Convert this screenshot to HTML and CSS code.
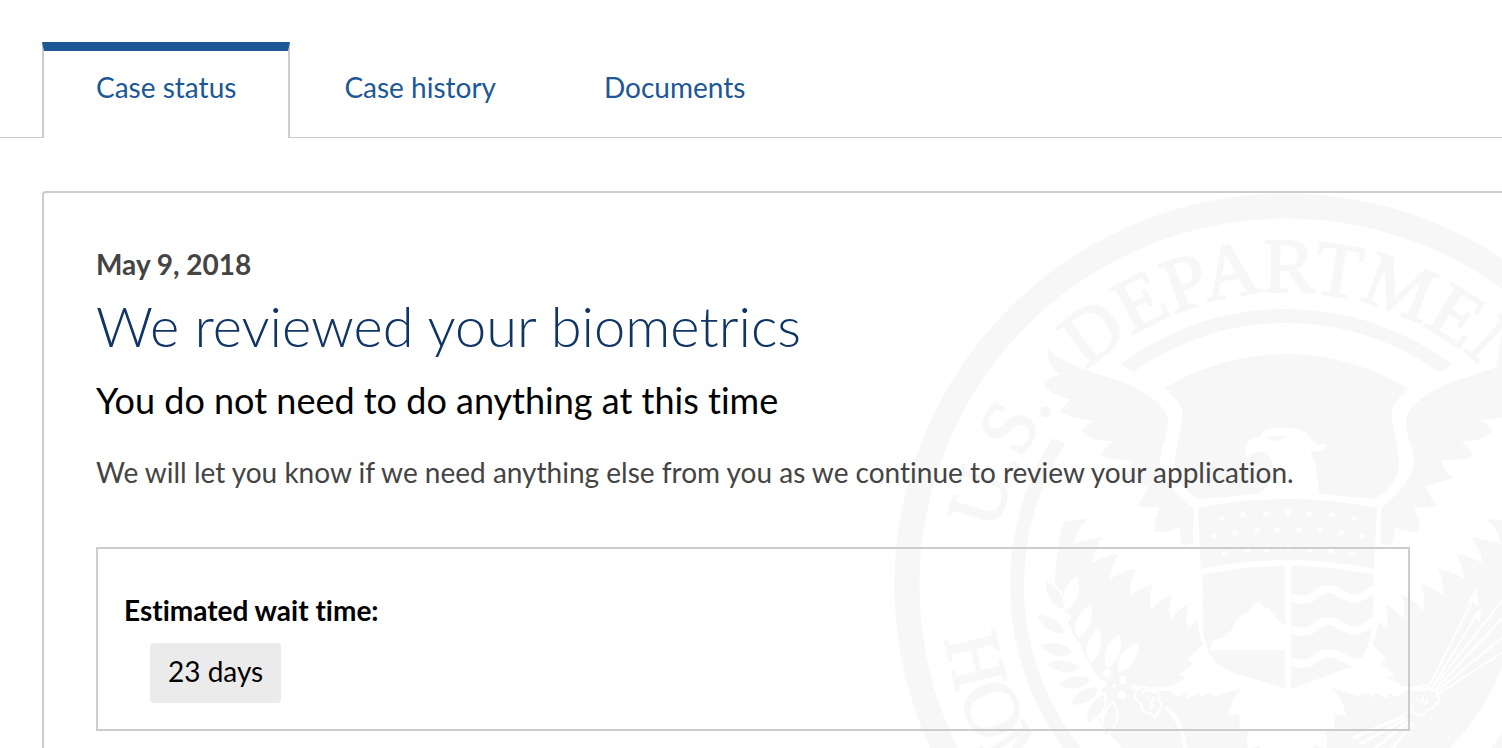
FILE: index.html
```html
<!DOCTYPE html>
<html lang="en">
<head>
    <meta charset="UTF-8">
    <meta name="viewport" content="width=device-width, initial-scale=1.0">
    <title>Case status</title>
    <link rel="stylesheet" href="styles.css">
</head>
<body>
    <nav class="tabs">
        <a href="#status" class="tab active" aria-current="page">Case status</a>
        <a href="#history" class="tab">Case history</a>
        <a href="#documents" class="tab">Documents</a>
    </nav>

    <main class="card" id="status">
        <!-- Department seal watermark -->
        <svg class="seal" viewBox="0 0 784 784" aria-hidden="true">
            <defs>
                <path id="top-arc" d="M99 392 A293 293 0 0 1 685 392"/>
                <path id="bottom-arc" d="M47 392 A345 345 0 0 0 737 392"/>
                <path id="star" d="M0 -4 L1 -1 L4 -1 L2 1 L3 4 L0 2 L-3 4 L-2 1 L-4 -1 L-1 -1Z"/>
                <path id="leaf" d="M0 0 C-10 -9 -8 -24 3 -36 C10 -24 9 -10 0 0Z"/>
                <g id="wing">
                    <path class="light" d="M228 172 L246 183 L280 200 L271 197 C284 206 290 214 288 226 C285 245 281 260 281 272 C283 286 290 297 304 303 L393 300 L393 400 L306 420 L309 455 L306 425 Q298 431 294 436 Q290 424 295 411 Q284 416 277 426 Q273 413 279 401 Q265 407 257 418 Q254 404 259 391 Q246 395 236 403 Q236 389 242 375 Q228 379 216 386 Q217 373 224 361 Q210 363 198 370 Q200 356 209 344 Q195 346 179 351 Q182 336 194 326 L169 328 L172 251 L157 245 L152 200 L146 180 L150 152Z"/>
                    <path d="M154 156 C171 172 200 180 226 188 C246 196 271 210 274 226 C275 240 267 253 266 268 C267 285 284 305 300 315 L299 350 L289 353 Q285 345 286 334 Q274 340 261 339 Q260 326 266 315 L243 313 Q250 305 254 293 L226 285 Q237 279 238 267 L216 266 L207 263 Q211 253 219 248 Q198 249 187 238 L198 227 Q175 226 166 218 L177 206 Q156 202 149 191 Q156 184 166 181 Q153 173 154 156Z"/>
                </g>
                <g id="leg">
                    <path class="light" d="M308 452 L293 466 L299 471 L285 482 L293 484 L278 493 L253 495 L253 498 L276 498 L283 504 L293 500 L292 505 L306 500 L305 505 L315 500 L321 503 L349 495 C337 504 336 515 334 523 L345 521 L346 537 L356 536 Q351 545 354 556 L365 552 L372 572 L393 575 L393 452Z"/>
                </g>
            </defs>

            <circle class="ring" cx="392" cy="392" r="379" stroke-width="25"/>
            <circle class="ring" cx="392" cy="392" r="269" stroke-width="14"/>
            <circle cx="392" cy="392" r="231"/>

            <use href="#wing"/>
            <use href="#wing" transform="matrix(-1 0 0 1 786 0)"/>
            <use href="#leg"/>
            <use href="#leg" transform="matrix(-1 0 0 1 786 0)"/>

            <text class="seal-text" text-anchor="middle"><textPath href="#top-arc" startOffset="54%">DEPARTMENT</textPath></text>
            <text class="seal-text"><textPath href="#top-arc" startOffset="54">U.S.</textPath></text>
            <text class="seal-text"><textPath href="#bottom-arc" startOffset="54">HOMELAND</textPath></text>

            <!-- Eagle head -->
            <path d="M288 220 L288 230 C285 245 281 260 281 272 C283 288 292 300 306 306 Q330 304 364 301 L425 301 L480 306 C494 300 503 288 505 272 C505 260 501 245 498 230 L498 220 Q393 150 288 220Z"/>
            <path class="light" d="M354 265 Q350 258 352 253 C355 246 360 245 366 244 Q368 239 373 236 Q385 234 396 235 Q409 236 414 241 Q418 249 423 251 L433 252 L428 258 L416 259 Q421 266 423 280 L425 303 L360 303 Q376 295 381 280 Q380 266 370 259 Q359 257 354 265Z"/>
            <path d="M373 244 Q382 242 391 243 Q386 249 380 248Z"/>

            <!-- Shield -->
            <path class="light" d="M300 313 Q393 289 487 313 L484 425 Q483 460 454 480 L394 501 L334 480 Q304 460 304 425Z"/>
            <path d="M304 315 Q393 297 483 315 L480 376 Q393 358 307 376Z"/>
            <path d="M308 382 Q350 373 391 373 L391 495 L353 484 Q319 475 314 457 Q308 445 309 425Z"/>
            <path d="M397 373 Q438 373 480 382 L479 425 Q478 445 471 458 Q468 470 454 475 L397 496Z"/>
            <path class="light" d="M316 457 L319 446 L325 446 Q338 441 341 429 L348 421 L353 420 L360 411 L366 410 L370 414 L375 415 L382 425 L391 433 L391 457Z"/>
            <g class="waves">
                <path d="M397 404 C420 414 420 396 434 396 C450 396 455 418 480 395"/>
                <path d="M397 436 C420 446 420 428 434 428 C450 428 455 450 480 427"/>
                <path d="M397 468 C420 478 420 460 434 460 C448 460 452 472 468 469"/>
            </g>
            <g class="light">
                <use href="#star" x="328" y="325"/>
                <use href="#star" x="349" y="321"/>
                <use href="#star" x="372" y="320"/>
                <use href="#star" x="394" y="319"/>
                <use href="#star" x="415" y="320"/>
                <use href="#star" x="438" y="321"/>
                <use href="#star" x="460" y="325"/>
                <use href="#star" x="320" y="342"/>
                <use href="#star" x="341" y="339"/>
                <use href="#star" x="363" y="337"/>
                <use href="#star" x="383" y="336"/>
                <use href="#star" x="405" y="336"/>
                <use href="#star" x="426" y="337"/>
                <use href="#star" x="447" y="339"/>
                <use href="#star" x="468" y="342"/>
                <use href="#star" x="331" y="360"/>
                <use href="#star" x="353" y="357"/>
                <use href="#star" x="373" y="356"/>
                <use href="#star" x="395" y="355"/>
                <use href="#star" x="416" y="356"/>
                <use href="#star" x="437" y="357"/>
                <use href="#star" x="458" y="360"/>
            </g>

            <!-- Olive branch -->
            <path class="light" d="M158 384 L161 392 Q174 440 206 486 L212 530 L180 510 L150 440Z"/>
            <g class="leaves">
                <use href="#leaf" transform="translate(171 417) rotate(-38)"/>
                <use href="#leaf" transform="translate(172 440) rotate(-62)"/>
                <use href="#leaf" transform="translate(180 459) rotate(-84)"/>
                <use href="#leaf" transform="translate(187 474) rotate(-90)"/>
                <use href="#leaf" transform="translate(198 485) rotate(-107)"/>
                <use href="#leaf" transform="translate(205 493) rotate(-128)"/>
                <use href="#leaf" transform="translate(210 500) rotate(-155)"/>
                <use href="#leaf" transform="translate(219 509) rotate(-172)"/>
            </g>
            <g class="light">
                <use href="#leaf" transform="translate(173 417) rotate(12)"/>
                <use href="#leaf" transform="translate(184 445) rotate(16)"/>
                <use href="#leaf" transform="translate(197 470) rotate(8)"/>
                <use href="#leaf" transform="translate(214 475) rotate(14)"/>
                <use href="#leaf" transform="translate(225 480) rotate(28)"/>
                <circle cx="173" cy="424" r="4"/>
                <circle cx="183" cy="453" r="4"/>
                <circle cx="193" cy="477" r="4"/>
                <circle cx="213" cy="480" r="4"/>
                <circle cx="209" cy="491" r="4"/>
                <circle cx="229" cy="487" r="4"/>
                <circle cx="240" cy="494" r="3"/>
                <circle cx="228" cy="502" r="4"/>
                <circle cx="185" cy="464" r="2"/>
                <circle cx="200" cy="485" r="2"/>
                <circle cx="220" cy="493" r="2"/>
            </g>
            <g class="lines">
                <path d="M241 499 Q247 491 255 496 L276 496 M241 499 Q240 508 247 510 Q247 520 256 520 Q262 529 265 517 Q270 511 264 507 Q269 498 259 499 Q250 494 248 502"/>
                <path d="M271 514 Q288 526 292 560" stroke-width="4"/>
                <path d="M252 504 L257 509 M260 503 L257 512 M255 516 L261 512"/>
            </g>

            <!-- Arrows -->
            <g class="lines">
                <path d="M534 496 L581 402 M537 496 L584 420 M538 496 L622 390 M541 497 L630 402 M542 499 L632 425 M544 501 L625 449"/>
                <path d="M513 496 L528 493 Q536 492 536 498 Q545 496 543 503 Q549 508 541 511 Q539 518 533 517 Q527 526 521 520 Q515 519 519 512"/>
                <path d="M522 504 L526 509 M529 502 L528 510 M534 506 L531 512"/>
                <path d="M459 545 L510 523 M466 551 L512 526 M480 556 L514 529 M497 557 L519 530" stroke-width="3"/>
            </g>
            <path class="light" d="M583 395 L573 409 L579 408 L584 414Z M587 414 L577 426 L582 425 L586 430Z"/>
        </svg>

        <div class="content">
            <p class="date">May 9, 2018</p>
            <h1>We reviewed your biometrics</h1>
            <h2>You do not need to do anything at this time</h2>
            <p class="message">We will let you know if we need anything else from you as we continue to review your application.</p>

            <dl class="estimate">
                <dt>Estimated wait time:</dt>
                <dd>23 days</dd>
            </dl>
        </div>
    </main>
</body>
</html>
```

FILE: styles.css
```css
* {
    box-sizing: border-box;
}

body {
    margin: 0;
    padding-top: 42px;
    background-color: #fff;
    color: #444;
    font-family: Lato, "Open Sans", sans-serif;
    font-size: 28px;
    font-variant-ligatures: none;
    line-height: 40px;
}

/* Tabs */
.tabs {
    display: flex;
    padding-left: 42px;
    border-bottom: 1px solid #ccc;
}

.tab {
    margin-bottom: -1px;
    padding: 16px 52px 31px;
    border: 2px solid transparent;
    border-top-width: 9px;
    border-bottom: 0;
    color: #1c5796;
    text-decoration: none;
}

.tab.active {
    border-color: #1c5796 #ccc;
    background-color: #fff;
}

/* Card runs off the right side of the window */
.card {
    position: relative;
    margin: 53px 0 0 42px;
    padding: 51px 92px 52px 52px;
    border: 2px solid #ccc;
    border-right: 0;
    border-radius: 4px 0 0 4px;
    overflow: hidden;
}

.seal {
    position: absolute;
    top: 0;
    right: -176px;
    width: 784px;
    height: 784px;
    fill: #f7f7f7;
}

.seal .light {
    fill: #fff;
}

.ring {
    fill: none;
    stroke: #f7f7f7;
}

.seal-text {
    font-family: "Liberation Serif", serif;
    font-size: 78px;
    stroke: #f7f7f7;
    stroke-width: 2px;
}

.waves {
    fill: none;
    stroke: #fff;
    stroke-width: 8px;
}

.leaves {
    stroke: #fff;
    stroke-width: 2px;
}

.lines {
    fill: none;
    stroke: #fff;
    stroke-width: 2px;
}

/* Keeps the text above the seal */
.content {
    position: relative;
}

.date,
.message,
h1,
h2 {
    margin: 0;
}

.date {
    font-weight: 700;
}

h1 {
    margin-top: 6px;
    color: #0f3567;
    font-size: 56px;
    font-weight: 300;
    line-height: 72px;
}

h2 {
    margin-top: 14px;
    color: #000;
    font-size: 36px;
    font-weight: 400;
    line-height: 48px;
}

.message {
    margin-top: 28px;
}

.estimate {
    margin: 55px 0 0;
    padding: 41px 26px 26px;
    border: 2px solid #ccc;
    color: #000;
}

.estimate dt {
    font-weight: 700;
}

.estimate dd {
    width: fit-content;
    margin: 13px 0 0 26px;
    padding: 8px 18px 12px;
    border-radius: 4px;
    background-color: #ebebeb;
}
```
